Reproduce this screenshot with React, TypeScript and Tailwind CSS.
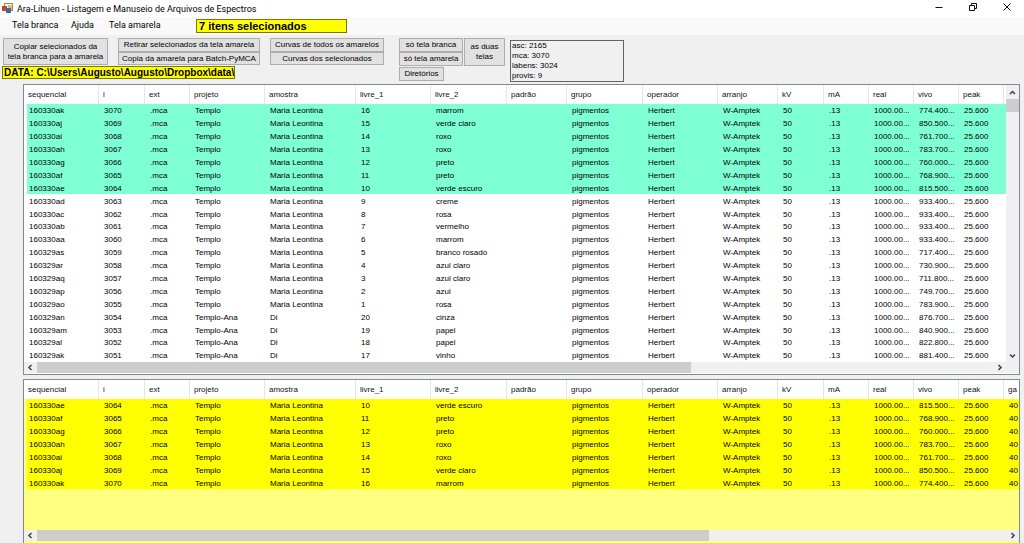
import type { ReactNode } from 'react'
import clsx from 'clsx'

const columns = [
  { label: 'sequencial', width: 'w-[72px]' },
  { label: 'i', width: 'w-[46px]' },
  { label: 'ext', width: 'w-[45px]' },
  { label: 'projeto', width: 'w-[75px]' },
  { label: 'amostra', width: 'w-[91px]' },
  { label: 'livre_1', width: 'w-[75px]' },
  { label: 'livre_2', width: 'w-[76px]' },
  { label: 'padrão', width: 'w-[60px]' },
  { label: 'grupo', width: 'w-[76px]' },
  { label: 'operador', width: 'w-[75px]' },
  { label: 'arranjo', width: 'w-[60px]' },
  { label: 'kV', width: 'w-[46px]' },
  { label: 'mA', width: 'w-[45px]' },
  { label: 'real', width: 'w-[45px]' },
  { label: 'vivo', width: 'w-[45px]' },
  { label: 'peak', width: 'w-[45px]' },
]

type Spectrum = {
  seq: string
  i: number
  projeto: string
  amostra: string
  livre1: string
  livre2: string
  vivo: string
}

const maria = { projeto: 'Templo', amostra: 'Maria Leontina' }
const ana = { projeto: 'Templo-Ana', amostra: 'Di' }

const spectra: Spectrum[] = [
  { seq: '160330ak', i: 3070, ...maria, livre1: '16', livre2: 'marrom', vivo: '774.400...' },
  { seq: '160330aj', i: 3069, ...maria, livre1: '15', livre2: 'verde claro', vivo: '850.500...' },
  { seq: '160330ai', i: 3068, ...maria, livre1: '14', livre2: 'roxo', vivo: '761.700...' },
  { seq: '160330ah', i: 3067, ...maria, livre1: '13', livre2: 'roxo', vivo: '783.700...' },
  { seq: '160330ag', i: 3066, ...maria, livre1: '12', livre2: 'preto', vivo: '760.000...' },
  { seq: '160330af', i: 3065, ...maria, livre1: '11', livre2: 'preto', vivo: '768.900...' },
  { seq: '160330ae', i: 3064, ...maria, livre1: '10', livre2: 'verde escuro', vivo: '815.500...' },
  { seq: '160330ad', i: 3063, ...maria, livre1: '9', livre2: 'creme', vivo: '933.400...' },
  { seq: '160330ac', i: 3062, ...maria, livre1: '8', livre2: 'rosa', vivo: '933.400...' },
  { seq: '160330ab', i: 3061, ...maria, livre1: '7', livre2: 'vermelho', vivo: '933.400...' },
  { seq: '160330aa', i: 3060, ...maria, livre1: '6', livre2: 'marrom', vivo: '933.400...' },
  { seq: '160329as', i: 3059, ...maria, livre1: '5', livre2: 'branco rosado', vivo: '717.400...' },
  { seq: '160329ar', i: 3058, ...maria, livre1: '4', livre2: 'azul claro', vivo: '730.900...' },
  { seq: '160329aq', i: 3057, ...maria, livre1: '3', livre2: 'azul claro', vivo: '711.800...' },
  { seq: '160329ap', i: 3056, ...maria, livre1: '2', livre2: 'azul', vivo: '749.700...' },
  { seq: '160329ao', i: 3055, ...maria, livre1: '1', livre2: 'rosa', vivo: '783.900...' },
  { seq: '160329an', i: 3054, ...ana, livre1: '20', livre2: 'cinza', vivo: '876.700...' },
  { seq: '160329am', i: 3053, ...ana, livre1: '19', livre2: 'papel', vivo: '840.900...' },
  { seq: '160329al', i: 3052, ...ana, livre1: '18', livre2: 'papel', vivo: '822.800...' },
  { seq: '160329ak', i: 3051, ...ana, livre1: '17', livre2: 'vinho', vivo: '881.400...' },
]

const selected = spectra.slice(0, 7)

function Chevron({ dir }: { dir: 'up' | 'down' | 'left' | 'right' }) {
  const paths = {
    up: 'M2 6 4.5 3.5 7 6',
    down: 'M2 3.5 4.5 6 7 3.5',
    left: 'M5.5 2 3 4.5 5.5 7',
    right: 'M3.5 2 6 4.5 3.5 7',
  }
  return (
    <svg viewBox="0 0 9 9" className="size-[9px]" fill="none" stroke="#404040" strokeWidth="1.5">
      <path d={paths[dir]} />
    </svg>
  )
}

function Button({ className, children }: { className?: string; children: ReactNode }) {
  return (
    <button
      type="button"
      className={clsx(
        'flex items-center justify-center whitespace-nowrap border border-[#adadad] bg-[#e1e1e1] text-center leading-[10px]',
        className,
      )}
    >
      {children}
    </button>
  )
}

function SpectraTable({ rows, isMarked, markedClass, className, showGain }: {
  rows: Spectrum[]
  isMarked: (s: Spectrum) => boolean
  markedClass: string
  className: string
  showGain?: boolean
}) {
  return (
    <div className="min-w-0 flex-1 overflow-hidden bg-[linear-gradient(#fff,#fff)] bg-[length:100%_19px] bg-no-repeat pl-[3px]">
      <table className={clsx('table-fixed border-separate border-spacing-0 leading-[11px]', className)}>
        <thead>
          <tr>
            {columns.map((c) => (
              <th
                key={c.label}
                className={clsx('h-[19px] border-r border-[#e5e5e5] p-0 pl-1 text-left font-normal text-[#101018] first:pl-px', c.width)}
              >
                {c.label}
              </th>
            ))}
            {/* last column takes whatever width is left */}
            <th className="h-[19px] p-0 pl-1 text-left font-normal text-[#101018]">{showGain && 'ga'}</th>
          </tr>
        </thead>
        <tbody>
          {rows.map((s) => (
            <tr key={s.seq} className={clsx('[&>td]:p-0 [&>td]:pt-px [&>td]:pl-[5px] [&>td:first-child]:pl-0.5', isMarked(s) && markedClass)}>
              <td>{s.seq}</td>
              <td>{s.i}</td>
              <td>.mca</td>
              <td>{s.projeto}</td>
              <td>{s.amostra}</td>
              <td>{s.livre1}</td>
              <td>{s.livre2}</td>
              <td></td>
              <td>pigmentos</td>
              <td>Herbert</td>
              <td>W-Amptek</td>
              <td>50</td>
              <td>.13</td>
              <td>1000.00...</td>
              <td>{s.vivo}</td>
              <td>25.600</td>
              <td>{showGain && '40'}</td>
            </tr>
          ))}
        </tbody>
      </table>
    </div>
  )
}

function HorizontalScroll({ thumb, className }: { thumb: string; className?: string }) {
  return (
    <div className={clsx('flex h-[11px] items-stretch bg-[#f0f0f0]', className)}>
      <button type="button" aria-label="Rolar para a esquerda" className="flex w-[13px] items-center justify-center">
        <Chevron dir="left" />
      </button>
      <div className="flex-1">
        <div className={clsx('h-full bg-[#cdcdcd]', thumb)} />
      </div>
      <button type="button" aria-label="Rolar para a direita" className="flex w-[13px] items-center justify-center">
        <Chevron dir="right" />
      </button>
    </div>
  )
}

function TitleBar() {
  return (
    <header className="flex h-[17px] items-center bg-white pl-0.5 font-[Roboto,sans-serif] text-[9px] leading-3">
      <svg viewBox="0 0 11 11" className="mr-1 size-[11px]">
        <rect x="2.5" y="0.5" width="8" height="7" fill="#fff" stroke="#8a8a8a" />
        <rect x="6" y="2" width="4" height="5" fill="#f2c230" />
        <rect x="0" y="3" width="5" height="5" fill="#c8452c" />
        <rect x="4" y="5" width="5" height="5" fill="#3d66b8" />
      </svg>
      <h1 className="flex-1">Ara-Lihuen - Listagem e Manuseio de Arquivos de Espectros</h1>
      <div className="flex h-[14px] self-start text-[#111]">
        <button type="button" aria-label="Minimizar" className="flex w-[34px] items-center justify-center">
          <svg viewBox="0 0 8 8" className="size-2" stroke="currentColor">
            <path d="M0.5 4.5h7" />
          </svg>
        </button>
        <button type="button" aria-label="Restaurar" className="flex w-[34px] items-center justify-center">
          <svg viewBox="0 0 8 8" className="size-2" fill="none" stroke="currentColor">
            <path d="M0.5 2.5h5v5h-5zM2.5 2.5v-2h5v5h-2" />
          </svg>
        </button>
        <button type="button" aria-label="Fechar" className="flex w-[34px] items-center justify-center">
          <svg viewBox="0 0 8 8" className="size-2" stroke="currentColor">
            <path d="M0.5 0.5l7 7M7.5 0.5l-7 7" />
          </svg>
        </button>
      </div>
    </header>
  )
}

export default function App() {
  return (
    <div className="flex min-h-screen flex-col bg-[#f0f0f0] font-['Liberation_Sans',sans-serif] text-[8px] whitespace-nowrap text-black">
      <TitleBar />

      <nav className="flex h-[18px] items-center bg-[#f9f9f9] pl-3 font-[Roboto,sans-serif] text-[9px]">
        <button type="button" className="w-[59px] text-left">Tela branca</button>
        <button type="button" className="w-[38px] text-left">Ajuda</button>
        <button type="button" className="w-[87px] text-left">Tela amarela</button>
        <output className="h-[14px] w-[151px] border border-[#77770a] bg-[#ffff00] pl-0.5 font-['Liberation_Sans',sans-serif] text-[11px] leading-3 font-bold">
          7 itens selecionados
        </output>
      </nav>

      <section className="flex h-[49px] items-start pt-[3px] pl-0.5">
        <div className="flex w-[397px] flex-col gap-px">
          <div className="flex gap-[10px] pl-px">
            <Button className="h-[27px] w-[105px]">
              Copiar selecionados da
              <br />
              tela branca para a amarela
            </Button>
            <div className="flex w-[142px] flex-col">
              <Button className="h-[14px]">Retirar selecionados da tela amarela</Button>
              <Button className="h-[13px]">Copia da amarela para Batch-PyMCA</Button>
            </div>
            <div className="flex w-[114px] flex-col">
              <Button className="h-[14px]">Curvas de todos os amarelos</Button>
              <Button className="h-[13px]">Curvas dos selecionados</Button>
            </div>
          </div>
          <output className="h-[13px] w-[233px] border border-[#77770a] bg-[#ffff00] pl-px text-[10px] leading-[11px] font-bold">
            DATA: C:\Users\Augusto\Augusto\Dropbox\data\
          </output>
        </div>
        <div className="flex flex-col gap-px">
          <div className="flex gap-px">
            <div className="flex w-[64px] flex-col">
              <Button className="h-[14px]">só tela branca</Button>
              <Button className="h-[14px]">só tela amarela</Button>
            </div>
            <Button className="h-[28px] w-[41px]">
              as duas
              <br />
              telas
            </Button>
          </div>
          <Button className="h-[14px] w-[45px]">Diretórios</Button>
        </div>
        <textarea
          readOnly
          aria-label="Contagem de arquivos"
          className="mt-0.5 ml-[5px] h-[42px] w-[114px] resize-none overflow-hidden border border-[#646464] bg-[#f0f0f0] pl-px leading-[10px]"
          defaultValue={'asc: 2165\nmca: 3070\nlabens: 3024\nprovis: 9'}
        />
      </section>

      <main className="flex flex-1 flex-col gap-1 pr-1 pl-[23px]">
        <section className="border border-[#828790] bg-white pb-px">
          <div className="flex">
            <SpectraTable
              rows={spectra}
              isMarked={(s) => selected.includes(s)}
              markedClass="bg-[#7fffd4]"
              className="h-[277px] w-full"
            />
            <div className="flex w-[13px] flex-col items-center bg-[#f0f0f0]">
              <button type="button" aria-label="Rolar para cima" className="flex h-[14px] w-full items-center justify-center">
                <Chevron dir="up" />
              </button>
              <div className="w-full flex-1">
                <div className="h-[13px] bg-[#cdcdcd]" />
              </div>
              <button type="button" aria-label="Rolar para baixo" className="flex h-[14px] w-full items-center justify-center">
                <Chevron dir="down" />
              </button>
            </div>
          </div>
          <HorizontalScroll thumb="w-[68.4%]" className="pr-[13px]" />
        </section>

        <section className="flex flex-1 flex-col border border-b-0 border-[#828790] bg-[#ffff80] pb-0.5">
          <div className="flex flex-1 items-start">
            <SpectraTable
              rows={[...selected].reverse()}
              isMarked={() => true}
              markedClass="bg-[#ffff00]"
              className="h-[109px] w-full"
              showGain
            />
          </div>
          <HorizontalScroll thumb="w-[69.3%]" />
        </section>
      </main>
    </div>
  )
}
